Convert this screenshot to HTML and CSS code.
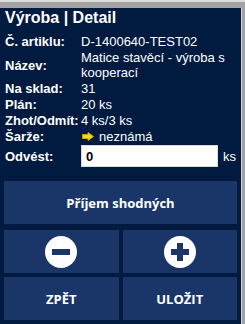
FILE: index.html
```html
<!DOCTYPE html>
<html lang="cs">
<head>
    <meta charset="UTF-8">
    <meta name="viewport" content="width=device-width, initial-scale=1.0">
    <title>Výroba | Detail</title>
    <link rel="stylesheet" href="styles.css">
</head>
<body>
    <div class="panel">
        <h1 class="title">Výroba | Detail</h1>
        <div class="info">
            <div class="label">Č. artiklu:</div>
            <div class="value">D-1400640-TEST02</div>
            <div class="label middle">Název:</div>
            <div class="value">Matice stavěcí - výroba s kooperací</div>
            <div class="label">Na sklad:</div>
            <div class="value">31</div>
            <div class="label">Plán:</div>
            <div class="value">20 ks</div>
            <div class="label">Zhot/Odmít:</div>
            <div class="value">4 ks/3 ks</div>
            <div class="label">Šarže:</div>
            <div class="value batch">
                <svg class="arrow" width="12" height="9" viewBox="0 0 12 9"><path d="M0.5 2.5h5.5V0.5l5.5 4-5.5 4V6.5H0.5z" fill="#f8d81c" stroke="#d9a000" stroke-width="1"/></svg>
                <span>neznámá</span>
            </div>
            <div class="label field">Odvést:</div>
            <div class="value field"><input class="qty" type="text" value="0"> ks</div>
        </div>
        <div class="actions">
            <button class="btn wide">Příjem shodných</button>
            <button class="btn">
                <svg width="32" height="32" viewBox="0 0 32 32"><circle cx="16" cy="16" r="16" fill="#fff"/><rect x="7" y="13" width="18" height="6" fill="#1a3668"/></svg>
            </button>
            <button class="btn">
                <svg width="32" height="32" viewBox="0 0 32 32"><circle cx="16" cy="16" r="16" fill="#fff"/><rect x="7" y="13" width="18" height="6" fill="#1a3668"/><rect x="13" y="7" width="6" height="18" fill="#1a3668"/></svg>
            </button>
            <button class="btn">ZPĚT</button>
            <button class="btn">ULOŽIT</button>
        </div>
    </div>
</body>
</html>
```

FILE: styles.css
```css
body {
    margin: 0;
    background-color: #a3a3a3;
    border-top: 2px solid #dcdcdc;
    overflow: hidden;
}
.panel {
    width: 233px;
    height: 322px;
    padding: 0 4px;
    background-color: #001a40;
    border-right: 1px solid #d4d4d4;
    color: white;
    font-family: "Liberation Sans", Arial, sans-serif;
    font-size: 13px;
}
.title {
    margin: 6px 1px 0;
    font-size: 16px;
    line-height: 20px;
}
.info {
    display: grid;
    grid-template-columns: 76px 1fr;
    row-gap: 1px;
    margin: 6px 0 0 1px;
    line-height: 15px;
}
.label {
    font-weight: bold;
}
.label.middle {
    align-self: center;
}
.batch {
    display: flex;
    align-items: center;
    gap: 5px;
    height: 15px;
}
.arrow {
    display: block;
    margin-left: 1px;
}
.field {
    display: flex;
    align-items: center;
}
.qty {
    box-sizing: border-box;
    width: 137px;
    height: 22px;
    margin: 0 5px 0 0;
    padding: 0 4px;
    border: 1px solid #dcdcdc;
    font-family: "Liberation Sans", Arial, sans-serif;
    font-size: 13px;
    font-weight: bold;
    color: black;
}
.actions {
    display: grid;
    grid-template-columns: 1fr 1fr;
    gap: 4px;
    margin-top: 14px;
}
.btn {
    height: 43px;
    border: none;
    background-color: #1a3668;
    color: white;
    font-family: "Open Sans", sans-serif;
    font-size: 13px;
    font-weight: bold;
    display: flex;
    align-items: center;
    justify-content: center;
    padding: 0;
}
.btn.wide {
    grid-column: span 2;
    margin-bottom: 2px;
}
```
